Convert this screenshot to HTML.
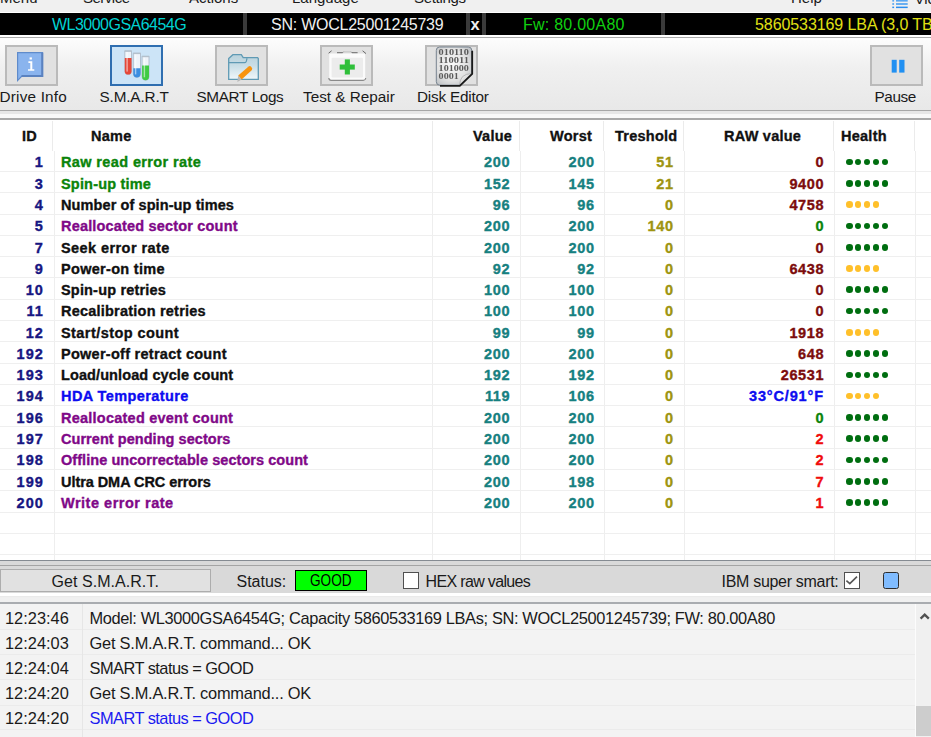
<!DOCTYPE html>
<html><head><meta charset="utf-8">
<style>
*{margin:0;padding:0;box-sizing:border-box}
html,body{width:931px;height:737px;overflow:hidden;background:#f0f0f0;font-family:"Liberation Sans",sans-serif}
.abs{position:absolute}
#menu{position:absolute;left:0;top:0;width:931px;height:12px;background:#f0f0f0;overflow:hidden}
#menu span{position:absolute;top:-11.5px;font-size:15px;color:#1a1a1a;white-space:nowrap}
#wl{position:absolute;left:0;top:12px;width:931px;height:1px;background:#fff}
#bar{position:absolute;left:0;top:13px;width:931px;height:22px;background:#000;overflow:hidden}
#bar .sep{position:absolute;top:0;height:22px;width:4px;background:#3a3a3a}
#bar span{position:absolute;top:3px;font-size:16px;white-space:nowrap;line-height:18px}
#below{position:absolute;left:0;top:35px;width:931px;height:2px;background:#fff}
#gl1{position:absolute;left:0;top:37px;width:931px;height:1px;background:#a9a9a9}
#tb{position:absolute;left:0;top:38px;width:931px;height:72px;background:linear-gradient(#fdfdfd,#f0f0f0 40%,#e8e8e8)}
.btn{position:absolute;top:44.5px;width:53.5px;height:41.3px;background:#e1e1e1;border:2px solid #bababa;margin-left:-0.2px}
.btn.sel{background:#cce4f7;border:2px solid #2f6eb0}
.lbl{position:absolute;top:89px;font-size:15.3px;color:#1a1a1a;white-space:nowrap;line-height:16px}
#sepA{position:absolute;left:0;top:110px;width:931px;height:1px;background:#a6a6a6}
#sepB{position:absolute;left:0;top:111px;width:931px;height:3px;background:#e6e6e6}
#sepC{position:absolute;left:0;top:114px;width:931px;height:4px;background:#f8f8f8}
#sepD{position:absolute;left:0;top:118px;width:931px;height:2px;background:#a8a8a8}
#tbl{position:absolute;left:0;top:120px;width:931px;height:440px;background:#fff;overflow:hidden}
#hdr span{position:absolute;top:8.4px;font-size:14.5px;font-weight:bold;color:#111;white-space:nowrap;line-height:16px;letter-spacing:0.25px;-webkit-text-stroke:0.35px}
.hv{position:absolute;top:1px;width:1px;height:30px;background:#ebebeb}
.bv{position:absolute;top:31px;width:1px;height:410px;background:#eeeeee}
.hl{position:absolute;left:0;width:931px;height:1px;background:#efefef;margin-top:-120px}
.row{position:absolute;left:0;width:931px;height:21px;margin-top:-120px}
.c{position:absolute;top:4.6px;font-size:14.5px;font-weight:bold;white-space:nowrap;line-height:16px;letter-spacing:0.12px;-webkit-text-stroke:0.35px}
.id{right:887.2px;color:#161682;letter-spacing:1.0px}
.nm{left:61px}
.val{right:420.9px;color:#168080;letter-spacing:0.6px}
.wst{right:336.4px;color:#168080;letter-spacing:0.6px}
.thr{right:257.4px;color:#9e9410;letter-spacing:0.6px}
.raw{right:106.9px;letter-spacing:0.6px}
.dots{position:absolute;left:846px;top:9px;height:7px}
.dots i{display:inline-block;width:6.6px;height:6.6px;border-radius:50%;margin-right:2.3px;vertical-align:top}
.dg i{background:#006e10}
.dy i{background:#ffc02a}
#bot1{position:absolute;left:0;top:559.8px;width:931px;height:1.4px;background:#858b92}
#bot2{position:absolute;left:0;top:561px;width:931px;height:4px;background:#d9d9d9}
#bot3{position:absolute;left:0;top:565px;width:931px;height:1px;background:#a4a4a4}
#panel{position:absolute;left:0;top:566px;width:931px;height:27px;background:#d9d9d9}
#getbtn{position:absolute;left:0;top:569px;width:211px;height:23px;background:#e1e1e1;border:1px solid #adadad}
.ptxt{position:absolute;font-size:16px;color:#1a1a1a;white-space:nowrap;line-height:18px}
#good{position:absolute;left:295px;top:570px;width:72px;height:21px;background:#00ff00;border:1px solid #000}
.chk{position:absolute;top:572.3px;width:16px;height:16.3px;background:#fff;border:1.4px solid #505050}
#blue{position:absolute;left:883px;top:572.3px;width:16px;height:16.3px;background:#80bcff;border:1.6px solid #2e2e2e;border-radius:2.5px}
#gap{position:absolute;left:0;top:593px;width:931px;height:9px;background:linear-gradient(#ffffff 0px,#ffffff 2.5px,#e6e6e6 3px,#eeeeee 4px,#f0f0f0 5px)}
#lgl{position:absolute;left:0;top:602px;width:931px;height:2px;background:#a9acb0}
#log{position:absolute;left:0;top:603px;width:931px;height:134px;background:#f3f3f3;overflow:hidden}
.lrow{position:absolute;left:0;width:915px;height:25px}
.lsep{position:absolute;left:0;width:915px;height:1px;background:#ebebeb}
.lrow span{position:absolute;top:6px;font-size:16.4px;color:#1a1a1a;white-space:nowrap;line-height:18px;letter-spacing:-0.4px}
.lrow span.t{letter-spacing:0px}
.lrow span.g{letter-spacing:-0.22px}
.lrow span.s{letter-spacing:-0.53px}
.lrow span.m{letter-spacing:-0.36px}
#lv{position:absolute;left:82px;top:0;width:1px;height:134px;background:#e6e6e6}
#sb{position:absolute;left:915px;top:0;width:16px;height:134px;background:#f0f0f0;border-left:1px solid #fcfcfc}
#thumb{position:absolute;left:916px;top:103px;width:15px;height:30px;background:#cdcdcd}
</style></head><body>
<div id="menu">
<span style="left:0px">Menu</span>
<span style="left:83px;letter-spacing:-0.5px">Service</span>
<span style="left:189px">Actions</span>
<span style="left:292px">Language</span>
<span style="left:414px;letter-spacing:-0.3px">Settings</span>
<span style="left:791px">Help</span>
<svg class="abs" style="left:892px;top:0" width="16" height="12"><rect x="0.3" y="-0.2" width="1.8" height="1.8" fill="#5aa8f2"/><rect x="4" y="-0.2" width="11.7" height="1.8" fill="#5aa8f2"/><rect x="0.3" y="3.2" width="1.8" height="1.6" fill="#4aa0f0"/><rect x="4" y="3.2" width="11.7" height="1.6" fill="#4aa0f0"/><rect x="0.3" y="6.6" width="1.8" height="1.5" fill="#2a8ef0"/><rect x="4" y="6.6" width="11.7" height="1.5" fill="#2a8ef0"/></svg>
<span style="left:914.5px;top:-10.5px">View</span>
</div>
<div id="wl"></div>
<div id="bar">
<span style="left:52px;color:#00d2d2;letter-spacing:-0.52px">WL3000GSA6454G</span>
<div class="sep" style="left:243px"></div>
<span style="left:271px;color:#f0f0f0;letter-spacing:-0.24px">SN: WOCL25001245739</span>
<div class="sep" style="left:466px"></div>
<span style="left:470.5px;top:2px;color:#f0f0f0;font-weight:bold;font-size:16.5px">x</span>
<div class="sep" style="left:482px"></div>
<span style="left:523px;color:#10d010;letter-spacing:0.25px">Fw: 80.00A80</span>
<div class="sep" style="left:661px"></div>
<span style="left:755px;color:#e0e014;letter-spacing:-0.08px">5860533169 LBA (3,0 TB)</span>
</div>
<div id="below"></div>
<div id="gl1"></div>
<div id="tb"></div>
<!-- toolbar buttons -->
<div class="btn" style="left:5px">
<svg class="abs" style="left:10.5px;top:5px" width="30" height="32" viewBox="0 0 30 32"><path d="M0.6 0.6 H25.6 V24.4 H4.6 L0.6 28.6 Z" fill="#8ab4ee" stroke="#5f8bcb" stroke-width="1.2"/><path d="M25.2 1 V23.9 H4.5" fill="none" stroke="#5a82c0" stroke-width="2"/><rect x="12.6" y="5.4" width="2.3" height="2.1" fill="#fff"/><path d="M11.4 9.3 H15.3 V17.2 H17.3 V18.8 H11 V17.2 H13.3 V11 H11.4 Z" fill="#fff"/></svg>
</div>
<div class="lbl" style="left:-0.5px;letter-spacing:0.2px">Drive Info</div>
<div class="btn sel" style="left:110px">
<svg class="abs" style="left:12px;top:3px" width="30" height="34" viewBox="0 0 30 34"><path d="M0.8 0.9 H7.5 V21.25 A3.35 3.35 0 0 1 0.8 21.25 Z" fill="#eef3fa" stroke="#aebccb" stroke-width="0.9"/><path d="M0.8 7.9 H7.5 V21.25 A3.35 3.35 0 0 1 0.8 21.25 Z" fill="#e5483a"/><rect x="2.40" y="1.9" width="1.4" height="19.70" fill="#ffffff" opacity="0.55"/><rect x="0.50" y="0.5" width="7.30" height="1.3" fill="#b4c0cc"/><path d="M9.3 3.2 H16.5 V23.80 A3.60 3.60 0 0 1 9.3 23.80 Z" fill="#eef3fa" stroke="#aebccb" stroke-width="0.9"/><path d="M9.3 18.2 H16.5 V23.80 A3.60 3.60 0 0 1 9.3 23.80 Z" fill="#3c8ee0"/><rect x="10.90" y="4.2" width="1.4" height="20.20" fill="#ffffff" opacity="0.55"/><rect x="9.00" y="2.8000000000000003" width="7.80" height="1.3" fill="#b4c0cc"/><path d="M18.1 6.3 H25.0 V26.85 A3.45 3.45 0 0 1 18.1 26.85 Z" fill="#eef3fa" stroke="#aebccb" stroke-width="0.9"/><path d="M18.1 15.6 H25.0 V26.85 A3.45 3.45 0 0 1 18.1 26.85 Z" fill="#3fcb44"/><rect x="19.70" y="7.3" width="1.4" height="20.00" fill="#ffffff" opacity="0.55"/><rect x="17.80" y="5.8999999999999995" width="7.50" height="1.3" fill="#b4c0cc"/></svg>
</div>
<div class="lbl" style="left:99.5px;letter-spacing:-0.15px">S.M.A.R.T</div>
<div class="btn" style="left:215px">
<svg class="abs" style="left:11px;top:7px" width="34" height="32" viewBox="0 0 34 32"><defs><linearGradient id="fg" x1="0" y1="0" x2="0" y2="1"><stop offset="0" stop-color="#b9d1db"/><stop offset="0.45" stop-color="#c9dee6"/><stop offset="1" stop-color="#f0f7fa"/></linearGradient></defs><path d="M0.7 4.6 L4.9 0.7 H13.3 L15.2 3.7 H29.6 L30.3 4.4 V25.3 H0.7 Z" fill="url(#fg)" stroke="#5f9ab4" stroke-width="1.3"/><path d="M0.7 8.7 H16.6 Q18.6 8.7 18.9 4.2" fill="none" stroke="#5f9ab4" stroke-width="1.3"/><path d="M10.2 21.6 L20.6 12.4 Q22 11.5 23.4 13 L24 14.2 Q24.4 15.5 23.4 16.6 L13.6 25.6 Z" fill="#f7940f"/><path d="M10.2 21.6 L13.6 25.6 L9.4 28 Z" fill="#b8b8b8"/></svg>
</div>
<div class="lbl" style="left:196.5px;letter-spacing:-0.35px">SMART Logs</div>
<div class="btn" style="left:320px">
<svg class="abs" style="left:6.5px;top:2.5px" width="40" height="34" viewBox="0 0 40 34"><rect x="1.2" y="4.6" width="36" height="26.4" rx="1.5" fill="#fbfbfb"/><rect x="3.6" y="8.8" width="31.4" height="19.8" rx="1" fill="#ececec"/><path d="M0.6 4.2 L3.6 1.8 M9 3.7 H14.6 L15.6 2.7 M23 2.7 L24 3.7 H29.6 M34.6 1.8 L38 4.6" stroke="#6a6a6a" stroke-width="1" fill="none"/><path d="M15.6 2.9 H23" stroke="#c4c4c4" stroke-width="1" fill="none"/><path d="M0.8 29 Q1 31.3 3.2 31.4 H35.2 Q37.4 31.3 37.8 29" stroke="#8a8a8a" stroke-width="1.2" fill="none"/><rect x="16.8" y="10.4" width="5.1" height="15.1" fill="#2fbf3a"/><rect x="11.7" y="15.5" width="15.1" height="5.1" fill="#2fbf3a"/></svg>
</div>
<div class="lbl" style="left:303px">Test &amp; Repair</div>
<div class="btn" style="left:425px">
<svg class="abs" style="left:8.5px;top:-0.5px;will-change:transform" width="40" height="42" viewBox="0 0 40 42"><defs><radialGradient id="pg" cx="0.45" cy="0.45" r="0.7"><stop offset="0" stop-color="#fafafa"/><stop offset="0.6" stop-color="#e2e2e2"/><stop offset="1" stop-color="#b8bcc0"/></radialGradient><linearGradient id="cg" x1="0" y1="0" x2="1" y2="1"><stop offset="0" stop-color="#ffffff"/><stop offset="1" stop-color="#b0b0b0"/></linearGradient></defs><path d="M4.5 1 H33.3 Q36.8 1 36.8 4.5 V27.5 L24.5 39.2 H4.8 Q1.3 39.2 1.3 35.7 V4.5 Q1.3 1 4.5 1 Z" fill="url(#pg)" stroke="#77838f" stroke-width="1"/><text x="3.6" y="9.3" font-family="Liberation Serif" font-weight="bold" font-size="8.8" fill="#5a5a5a" textLength="30.3" lengthAdjust="spacingAndGlyphs">010110</text><text x="3.6" y="17.3" font-family="Liberation Serif" font-weight="bold" font-size="8.8" fill="#5a5a5a" textLength="30.3" lengthAdjust="spacingAndGlyphs">110011</text><text x="3.6" y="25.4" font-family="Liberation Serif" font-weight="bold" font-size="8.8" fill="#5a5a5a" textLength="30.3" lengthAdjust="spacingAndGlyphs">101000</text><text x="3.6" y="33.4" font-family="Liberation Serif" font-weight="bold" font-size="8.8" fill="#5a5a5a" textLength="20.2" lengthAdjust="spacingAndGlyphs">0001</text><path d="M36.8 27.5 Q30.5 27.8 27.6 30.6 Q25 33.5 24.5 39.2 Z" fill="url(#cg)" stroke="#9a9a9a" stroke-width="0.6"/><path d="M37.2 4.8 V27.8 L24.8 39.8 H5" fill="none" stroke="#1a1a1a" stroke-width="1.8"/></svg>
</div>
<div class="lbl" style="left:417px;letter-spacing:-0.2px">Disk Editor</div>
<div class="btn" style="left:870px">
<svg class="abs" style="left:19px;top:12px" width="16" height="16"><rect x="0.7" y="0.8" width="5" height="12.8" fill="#2190f2"/><rect x="8.2" y="0.8" width="5.3" height="12.8" fill="#2190f2"/></svg>
</div>
<div class="lbl" style="left:874.5px;letter-spacing:-0.4px">Pause</div>
<div id="sepA"></div><div id="sepB"></div><div id="sepC"></div><div id="sepD"></div>
<div id="tbl">
<div id="hdr">
<span style="left:22px">ID</span>
<span style="left:91px">Name</span>
<span style="left:473px">Value</span>
<span style="left:550px">Worst</span>
<span style="left:615px">Treshold</span>
<span style="left:724px">RAW value</span>
<span style="left:841px">Health</span>
</div>
<div class="hv" style="left:52px"></div>
<div class="hv" style="left:432px"></div>
<div class="hv" style="left:519px"></div>
<div class="hv" style="left:603px"></div>
<div class="hv" style="left:683px"></div>
<div class="hv" style="left:833px"></div>
<div class="hv" style="left:914px"></div>
<div class="bv" style="left:54px"></div>
<div class="bv" style="left:432px"></div>
<div class="bv" style="left:520px"></div>
<div class="bv" style="left:604px"></div>
<div class="bv" style="left:684px"></div>
<div class="bv" style="left:834px"></div>
<div class="bv" style="left:915px"></div>
<div class="hl" style="top:171.08px"></div><div class="hl" style="top:192.36px"></div><div class="hl" style="top:213.64px"></div><div class="hl" style="top:234.92px"></div><div class="hl" style="top:256.20px"></div><div class="hl" style="top:277.48px"></div><div class="hl" style="top:298.76px"></div><div class="hl" style="top:320.04px"></div><div class="hl" style="top:341.32px"></div><div class="hl" style="top:362.60px"></div><div class="hl" style="top:383.88px"></div><div class="hl" style="top:405.16px"></div><div class="hl" style="top:426.44px"></div><div class="hl" style="top:447.72px"></div><div class="hl" style="top:469.00px"></div><div class="hl" style="top:490.28px"></div><div class="hl" style="top:511.56px"></div><div class="hl" style="top:532.84px"></div><div class="hl" style="top:554.12px"></div>
<div class="row" style="top:149.80px"><span class="c id">1</span><span class="c nm" style="color:#0a840a;letter-spacing:0.376px">Raw read error rate</span><span class="c val">200</span><span class="c wst">200</span><span class="c thr">51</span><span class="c raw" style="color:#7c0c0c">0</span><span class="dots dg"><i></i><i></i><i></i><i></i><i></i></span></div><div class="row" style="top:171.08px"><span class="c id">3</span><span class="c nm" style="color:#0a840a;letter-spacing:0.184px">Spin-up time</span><span class="c val">152</span><span class="c wst">145</span><span class="c thr">21</span><span class="c raw" style="color:#7c0c0c">9400</span><span class="dots dg"><i></i><i></i><i></i><i></i><i></i></span></div><div class="row" style="top:192.36px"><span class="c id">4</span><span class="c nm" style="color:#101010;letter-spacing:0.097px">Number of spin-up times</span><span class="c val">96</span><span class="c wst">96</span><span class="c thr">0</span><span class="c raw" style="color:#7c0c0c">4758</span><span class="dots dy"><i></i><i></i><i></i><i></i></span></div><div class="row" style="top:213.64px"><span class="c id">5</span><span class="c nm" style="color:#800888;letter-spacing:0.177px">Reallocated sector count</span><span class="c val">200</span><span class="c wst">200</span><span class="c thr">140</span><span class="c raw" style="color:#0a840a">0</span><span class="dots dg"><i></i><i></i><i></i><i></i><i></i></span></div><div class="row" style="top:234.92px"><span class="c id">7</span><span class="c nm" style="color:#101010;letter-spacing:0.420px">Seek error rate</span><span class="c val">200</span><span class="c wst">200</span><span class="c thr">0</span><span class="c raw" style="color:#7c0c0c">0</span><span class="dots dg"><i></i><i></i><i></i><i></i><i></i></span></div><div class="row" style="top:256.20px"><span class="c id">9</span><span class="c nm" style="color:#101010;letter-spacing:0.303px">Power-on time</span><span class="c val">92</span><span class="c wst">92</span><span class="c thr">0</span><span class="c raw" style="color:#7c0c0c">6438</span><span class="dots dy"><i></i><i></i><i></i><i></i></span></div><div class="row" style="top:277.48px"><span class="c id">10</span><span class="c nm" style="color:#101010;letter-spacing:0.177px">Spin-up retries</span><span class="c val">100</span><span class="c wst">100</span><span class="c thr">0</span><span class="c raw" style="color:#7c0c0c">0</span><span class="dots dg"><i></i><i></i><i></i><i></i><i></i></span></div><div class="row" style="top:298.76px"><span class="c id">11</span><span class="c nm" style="color:#101010;letter-spacing:0.220px">Recalibration retries</span><span class="c val">100</span><span class="c wst">100</span><span class="c thr">0</span><span class="c raw" style="color:#7c0c0c">0</span><span class="dots dg"><i></i><i></i><i></i><i></i><i></i></span></div><div class="row" style="top:320.04px"><span class="c id">12</span><span class="c nm" style="color:#101010;letter-spacing:0.433px">Start/stop count</span><span class="c val">99</span><span class="c wst">99</span><span class="c thr">0</span><span class="c raw" style="color:#7c0c0c">1918</span><span class="dots dy"><i></i><i></i><i></i><i></i></span></div><div class="row" style="top:341.32px"><span class="c id">192</span><span class="c nm" style="color:#101010;letter-spacing:0.270px">Power-off retract count</span><span class="c val">200</span><span class="c wst">200</span><span class="c thr">0</span><span class="c raw" style="color:#7c0c0c">648</span><span class="dots dg"><i></i><i></i><i></i><i></i><i></i></span></div><div class="row" style="top:362.60px"><span class="c id">193</span><span class="c nm" style="color:#101010;letter-spacing:0.097px">Load/unload cycle count</span><span class="c val">192</span><span class="c wst">192</span><span class="c thr">0</span><span class="c raw" style="color:#7c0c0c">26531</span><span class="dots dg"><i></i><i></i><i></i><i></i><i></i></span></div><div class="row" style="top:383.88px"><span class="c id">194</span><span class="c nm" style="color:#0c0cf0;letter-spacing:0.406px">HDA Temperature</span><span class="c val">119</span><span class="c wst">106</span><span class="c thr">0</span><span class="c raw" style="color:#0c0cf0;letter-spacing:0.85px;right:107.15px">33&deg;C/91&deg;F</span><span class="dots dy"><i></i><i></i><i></i><i></i></span></div><div class="row" style="top:405.16px"><span class="c id">196</span><span class="c nm" style="color:#800888;letter-spacing:0.234px">Reallocated event count</span><span class="c val">200</span><span class="c wst">200</span><span class="c thr">0</span><span class="c raw" style="color:#0a840a">0</span><span class="dots dg"><i></i><i></i><i></i><i></i><i></i></span></div><div class="row" style="top:426.44px"><span class="c id">197</span><span class="c nm" style="color:#800888;letter-spacing:0.047px">Current pending sectors</span><span class="c val">200</span><span class="c wst">200</span><span class="c thr">0</span><span class="c raw" style="color:#f00c0c">2</span><span class="dots dg"><i></i><i></i><i></i><i></i><i></i></span></div><div class="row" style="top:447.72px"><span class="c id">198</span><span class="c nm" style="color:#800888;letter-spacing:0.058px">Offline uncorrectable sectors count</span><span class="c val">200</span><span class="c wst">200</span><span class="c thr">0</span><span class="c raw" style="color:#f00c0c">2</span><span class="dots dg"><i></i><i></i><i></i><i></i><i></i></span></div><div class="row" style="top:469.00px"><span class="c id">199</span><span class="c nm" style="color:#101010;letter-spacing:-0.059px">Ultra DMA CRC errors</span><span class="c val">200</span><span class="c wst">198</span><span class="c thr">0</span><span class="c raw" style="color:#f00c0c">7</span><span class="dots dg"><i></i><i></i><i></i><i></i><i></i></span></div><div class="row" style="top:490.28px"><span class="c id">200</span><span class="c nm" style="color:#800888;letter-spacing:0.507px">Write error rate</span><span class="c val">200</span><span class="c wst">200</span><span class="c thr">0</span><span class="c raw" style="color:#f00c0c">1</span><span class="dots dg"><i></i><i></i><i></i><i></i><i></i></span></div>
</div>
<div id="bot1"></div><div id="bot2"></div><div id="bot3"></div>
<div id="panel"></div>
<div id="getbtn"></div>
<div class="ptxt" style="left:51.5px;top:572.5px;letter-spacing:0.05px">Get S.M.A.R.T.</div>
<div class="ptxt" style="left:236.5px;top:572.5px;letter-spacing:0px">Status:</div>
<div id="good"></div>
<div class="ptxt" style="left:310px;top:571px;font-size:16.4px;letter-spacing:0px;color:#000;transform:scaleX(0.83);transform-origin:0 0">GOOD</div>
<div class="chk" style="left:403px"></div>
<div class="ptxt" style="left:425.5px;top:572.5px;letter-spacing:-0.65px">HEX raw values</div>
<div class="ptxt" style="left:721.5px;top:572.5px;letter-spacing:-0.3px">IBM super smart:</div>
<div class="chk" style="left:844px"><svg width="14" height="14" style="position:absolute;left:0;top:0"><path d="M1.4 7.6 L4.8 10.6 L12 3.6" stroke="#555" stroke-width="1.6" fill="none"/></svg></div>
<div id="blue"></div>
<div id="gap"></div>
<div id="log">
<div class="lrow" style="top:0px"><span class="t" style="left:5px">12:23:46</span><span class="m" style="left:89.5px">Model: WL3000GSA6454G; Capacity 5860533169 LBAs; SN: WOCL25001245739; FW: 80.00A80</span></div>
<div class="lrow" style="top:25px"><span class="t" style="left:5px">12:24:03</span><span class="g" style="left:89.5px">Get S.M.A.R.T. command... OK</span></div>
<div class="lrow" style="top:50px"><span class="t" style="left:5px">12:24:04</span><span class="s" style="left:89.5px">SMART status = GOOD</span></div>
<div class="lrow" style="top:75px"><span class="t" style="left:5px">12:24:20</span><span class="g" style="left:89.5px">Get S.M.A.R.T. command... OK</span></div>
<div class="lrow" style="top:100px"><span class="t" style="left:5px">12:24:20</span><span class="s" style="left:89.5px;color:#1a1af0">SMART status = GOOD</span></div>
<div class="lsep" style="top:26px"></div><div class="lsep" style="top:51.2px"></div><div class="lsep" style="top:76.4px"></div><div class="lsep" style="top:101.5px"></div><div class="lsep" style="top:126.4px"></div>
<div id="lv"></div>
<div id="sb"><svg width="15" height="20" style="position:absolute;left:0;top:6px"><path d="M4.6 9.6 L8.7 5.6 L12.8 9.6" stroke="#505050" stroke-width="2.3" fill="none"/></svg></div>
<div id="thumb"></div>
</div>
<div id="lgl"></div>
</body></html>
